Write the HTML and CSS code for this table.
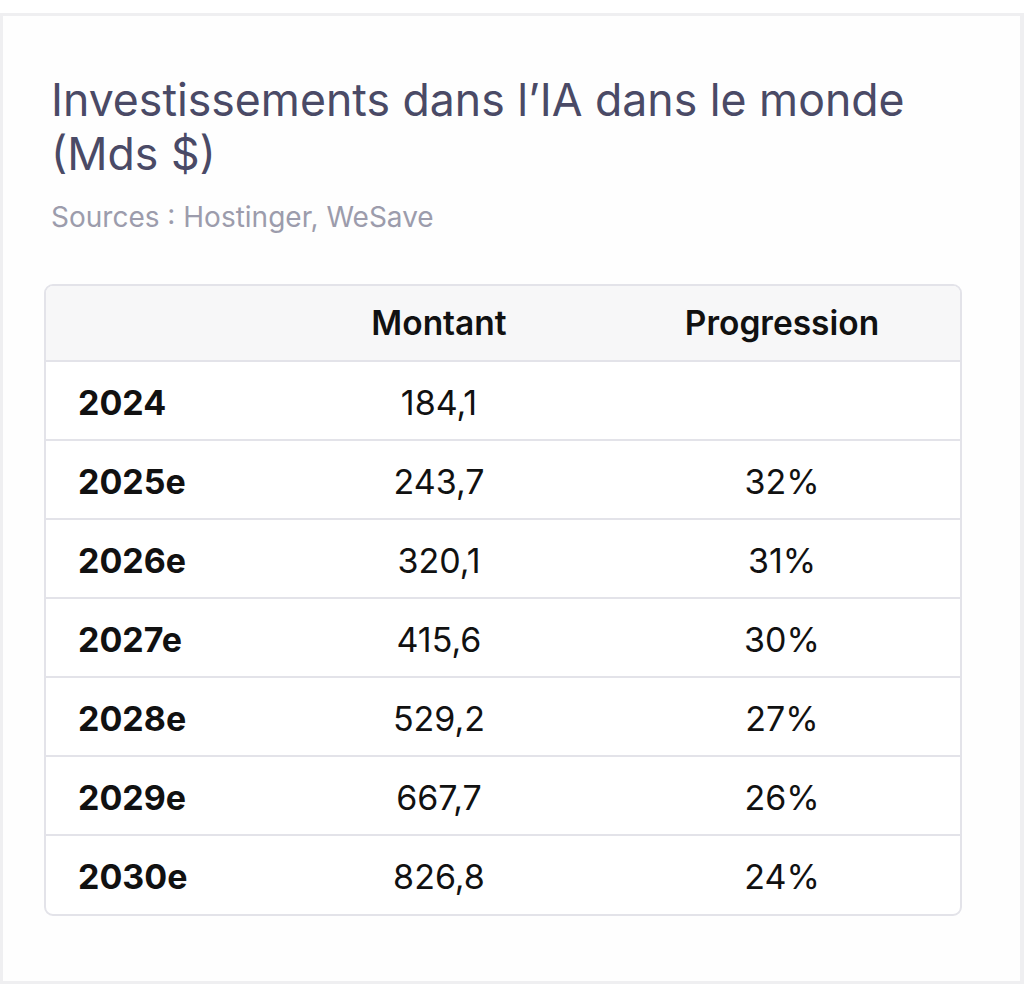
FILE: index.html
```html
<!DOCTYPE html>
<html lang="fr">
<head>
<meta charset="utf-8">
<title>Investissements dans l'IA</title>
<link rel="stylesheet" href="styles.css">
</head>
<body>
<div class="card">
  <div class="heading">
    <h1 class="title">Investissements dans l’IA dans le monde (Mds $)</h1>
    <p class="source">Sources : Hostinger, WeSave</p>
  </div>
  <div class="table-wrap">
    <table class="data">
      <thead>
        <tr class="head-row">
          <th class="col-year"></th>
          <th class="col-amount">Montant</th>
          <th class="col-prog">Progression</th>
        </tr>
      </thead>
      <tbody>
        <tr><td class="year">2024</td><td class="num">184,1</td><td class="num"></td></tr>
        <tr><td class="year">2025e</td><td class="num">243,7</td><td class="num">32%</td></tr>
        <tr><td class="year">2026e</td><td class="num">320,1</td><td class="num">31%</td></tr>
        <tr><td class="year">2027e</td><td class="num">415,6</td><td class="num">30%</td></tr>
        <tr><td class="year">2028e</td><td class="num">529,2</td><td class="num">27%</td></tr>
        <tr><td class="year">2029e</td><td class="num">667,7</td><td class="num">26%</td></tr>
        <tr><td class="year">2030e</td><td class="num">826,8</td><td class="num">24%</td></tr>
      </tbody>
    </table>
  </div>
</div>
</body>
</html>
```
FILE: styles.css
```css
* { box-sizing: border-box; }
html, body { margin: 0; padding: 0; background: #ffffff; }
body { font-family: Inter, "Noto Sans", "Liberation Sans", sans-serif; }

.card {
  margin-top: 13px;
  height: 971px;
  border: 3px solid #efeff1;
  border-right-width: 4px;
  background: #fefefe;
  padding: 0 58px 0 41px;
}

.heading { padding: 57px 0 0 7px; }

.title {
  margin: 0;
  font-size: 44.6px;
  line-height: 54px;
  font-weight: 400;
  color: #4a4a66;
  letter-spacing: 0;
}

.source {
  margin: 18px 0 0;
  font-size: 28px;
  line-height: 36px;
  color: #9c9cac;
}

.table-wrap {
  margin-top: 49px;
  border: 2px solid #e3e3e9;
  border-radius: 9px;
  overflow: hidden;
  background: #ffffff;
}

.data {
  width: 100%;
  border-collapse: collapse;
  table-layout: fixed;
}

.head-row { background: #f7f7f8; height: 75px; }

.data th {
  font-size: 33.5px;
  font-weight: 600;
  color: #111111;
  text-align: center;
  padding: 0;
}

.col-year { width: 228px; }
.col-amount { width: 330px; }

.data td {
  height: 79px;
  border-top: 2px solid #e3e3e9;
  font-size: 34px;
  color: #111111;
  padding: 3px 0 0;
}

.data td.year {
  font-weight: 700;
  padding-left: 32px;
  text-align: left;
}

.data td.num {
  text-align: center;
  font-weight: 400;
}
```
